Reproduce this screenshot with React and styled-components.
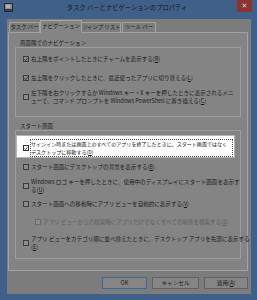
import React from "react";
import styled, { createGlobalStyle } from "styled-components";

const GlobalStyle = createGlobalStyle`
  html, body { margin: 0; padding: 0; background: #3f6088; }
  body { font-family: "Noto Sans CJK JP", "Noto Sans", sans-serif; }
  * { box-sizing: border-box; }
`;

const Window = styled.div`
  width: 257px;
  height: 300px;
  background: #3f6088;
  display: flex;
  flex-direction: column;
  overflow: hidden;
`;

const TitleBar = styled.div`
  height: 19px;
  flex: none;
  display: flex;
  align-items: flex-start;
`;

const AppIcon = styled.svg`
  margin: 3px 0 0 4px;
  flex: none;
`;

const Title = styled.div`
  flex: 1;
  text-align: center;
  font-size: 6.3px;
  line-height: 8px;
  margin-top: 4px;
  padding-left: 4px;
  color: #141820;
  white-space: nowrap;
`;

const CloseButton = styled.div`
  width: 15px;
  height: 12px;
  margin: 0 5px 0 0;
  background: #8c3530;
  color: #e6d6d6;
  font-size: 7px;
  line-height: 12px;
  text-align: center;
  font-family: "DejaVu Sans", sans-serif;
  flex: none;
`;

const Client = styled.div`
  flex: 1;
  margin: 0 6px 6px 7px;
  background: #7c7c7c;
  display: flex;
  flex-direction: column;
  padding: 1px 3px 0 1px;
`;

const TabStrip = styled.div`
  display: flex;
  align-items: flex-end;
  height: 13px;
  padding-left: 1px;
`;

const Tab = styled.div`
  width: ${(p) => p.$w}px;
  height: ${(p) => (p.$active ? "13px" : "11px")};
  margin-left: ${(p) => (p.$active ? "-1px" : "0")};
  margin-right: ${(p) => (p.$active ? "-1px" : "1px")};
  border: 1px solid #a2a2a2;
  border-bottom: ${(p) => (p.$active ? "none" : "1px solid #a2a2a2")};
  background: ${(p) => (p.$active ? "#848484" : "#7d7d7d")};
  font-size: 5.4px;
  line-height: ${(p) => (p.$active ? "11px" : "9px")};
  text-align: center;
  color: #1c1c1c;
  white-space: nowrap;
  position: relative;
  z-index: ${(p) => (p.$active ? 1 : 0)};
`;

const Panel = styled.div`
  height: 239px;
  margin-top: -1px;
  background: #848484;
  border: 1px solid #a2a2a2;
  padding: 6px 6px 0 6px;
`;

const GroupTitle = styled.div`
  height: 8px;
  font-size: 5.5px;
  line-height: 8px;
  padding-left: 5px;
  color: #1c1c1c;
  white-space: nowrap;
`;

const GroupBox = styled.div`
  border: 1px solid #9c9c9c;
  padding: ${(p) => p.$pad};
  margin-bottom: ${(p) => (p.$mb ? p.$mb : "0")};
`;

const Item = styled.div`
  display: flex;
  align-items: center;
  gap: 2px;
  margin-top: ${(p) => p.$mt || 0}px;
  padding-left: ${(p) => 7 + (p.$indent || 0)}px;
  color: ${(p) => (p.$disabled ? "#5e5e5e" : "#1c1c1c")};
`;

const Highlight = styled.div`
  display: flex;
  align-items: center;
  gap: 1px;
  margin: 4px 5px 0 0;
  background: #ffffff;
  border: 1px solid #b4b4b4;
  padding: 3px 1px 0 6px;
  color: #111;
`;

const Label = styled.div`
  font-size: 5.55px;
  line-height: 8px;
  white-space: nowrap;
`;

const Focus = styled.div`
  font-size: 5.05px;
  line-height: 8px;
  white-space: nowrap;
  border: 1px dotted #555;
  flex: 1;
`;

const Key = styled.span`
  text-decoration: underline;
`;

const Box = styled.div`
  width: 6px;
  height: 6px;
  flex: none;
  border: 1px solid ${(p) => (p.$bright ? "#333" : p.$disabled ? "#6c6c6c" : "#3e3e3e")};
  background: ${(p) => (p.$bright ? "#fff" : "#8c8c8c")};
  display: flex;
  align-items: center;
  justify-content: center;
`;

const ButtonRow = styled.div`
  display: flex;
  justify-content: flex-end;
  gap: 5px;
  margin-top: 6px;
`;

const Button = styled.div`
  width: ${(p) => p.$w}px;
  height: 12px;
  border: 1px solid ${(p) => (p.$default ? "#3d6a98" : "#626262")};
  background: #858585;
  font-size: 5.6px;
  line-height: 10px;
  text-align: center;
  color: #1c1c1c;
  white-space: nowrap;
`;

const Check = ({ checked, bright, disabled }) => (
  <Box $bright={bright} $disabled={disabled}>
    {checked && (
      <svg width="5" height="5" viewBox="0 0 5 5">
        <path d="M0.6 2.6 L1.9 3.9 L4.4 0.9" fill="none" stroke="#111" strokeWidth="1" />
      </svg>
    )}
  </Box>
);

export default function App() {
  return (
    <>
      <GlobalStyle />
      <Window>
        <TitleBar>
          <AppIcon width="9" height="9" viewBox="0 0 9 9">
            <rect x="0.5" y="0.5" width="8" height="8" fill="#8e8e8e" stroke="#2a2a2a" />
            <rect x="1" y="6" width="7" height="2" fill="#2c3e56" />
            <rect x="2" y="2" width="4" height="3" fill="#b0b0b0" />
          </AppIcon>
          <Title>タスク バーとナビゲーションのプロパティ</Title>
          <CloseButton>✕</CloseButton>
        </TitleBar>
        <Client>
          <TabStrip>
            <Tab $w={31}>タスク バー</Tab>
            <Tab $w={42} $active>ナビゲーション</Tab>
            <Tab $w={40}>ジャンプ リスト</Tab>
            <Tab $w={34}>ツール バー</Tab>
          </TabStrip>
          <Panel>
            <GroupTitle>画面隅でのナビゲーション</GroupTitle>
            <GroupBox $pad="7px 0 11px 0" $mb="5px">
              <Item>
                <Check checked />
                <Label>右上隅をポイントしたときにチャームを表示する(<Key>R</Key>)</Label>
              </Item>
              <Item $mt={11}>
                <Check checked />
                <Label>左上隅をクリックしたときに、最近使ったアプリに切り替える(<Key>L</Key>)</Label>
              </Item>
              <Item $mt={7}>
                <Check />
                <Label>
                  左下隅を右クリックするか Windows キー + X キーを押したときに表示されるメニ
                  <br />
                  ューで、コマンド プロンプトを Windows PowerShell に置き換える(<Key>C</Key>)
                </Label>
              </Item>
            </GroupBox>
            <GroupTitle>スタート画面</GroupTitle>
            <GroupBox $pad="0 0 7px 0">
              <Highlight>
                <Check checked bright />
                <Focus>
                  サインイン時または画面上のすべてのアプリを終了したときに、スタート画面ではなく
                  <br />
                  デスクトップに移動する(<Key>D</Key>)
                </Focus>
              </Highlight>
              <Item $mt={5}>
                <Check />
                <Label>スタート画面にデスクトップの背景を表示する(<Key>B</Key>)</Label>
              </Item>
              <Item $mt={7}>
                <Check />
                <Label>
                  Windows ロゴ キーを押したときに、使用中のディスプレイにスタート画面を表示す
                  <br />
                  る(<Key>U</Key>)
                </Label>
              </Item>
              <Item $mt={6}>
                <Check />
                <Label>スタート画面への移動時にアプリ ビューを自動的に表示する(<Key>V</Key>)</Label>
              </Item>
              <Item $mt={10} $indent={12} $disabled>
                <Check disabled />
                <Label>アプリ ビューからの検索時にアプリだけでなくすべての場所を検索する(<Key>S</Key>)</Label>
              </Item>
              <Item $mt={9}>
                <Check />
                <Label>
                  アプリ ビューをカテゴリ順に並べ替えたときに、デスクトップ アプリを先頭に表示する
                  <br />
                  (<Key>E</Key>)
                </Label>
              </Item>
            </GroupBox>
          </Panel>
          <ButtonRow>
            <Button $w={45} $default>OK</Button>
            <Button $w={47}>キャンセル</Button>
            <Button $w={44}>適用(<Key>A</Key>)</Button>
          </ButtonRow>
        </Client>
      </Window>
    </>
  );
}
